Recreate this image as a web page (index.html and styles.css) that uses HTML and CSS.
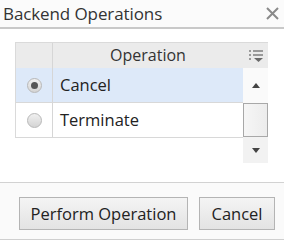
FILE: index.html
```html
<!DOCTYPE html>
<html>
<head>
<meta charset="utf-8">
<link rel="stylesheet" href="styles.css">
</head>
<body>
<div class="dialog">
  <div class="titlebar">
    <span class="title">Backend Operations</span>
    <span class="close">
      <svg width="13" height="13" viewBox="0 0 13 13"><path d="M1 1L12 12M12 1L1 12" stroke="#8a8a8a" stroke-width="2"/></svg>
    </span>
  </div>
  <div class="content">
    <div class="grid">
      <div class="ghead">
        <div class="hcell sel"></div>
        <div class="hcell name">Operation</div>
        <div class="hmenu">
          <svg width="14" height="12" viewBox="0 0 14 12">
            <rect x="0" y="0" width="2" height="2" fill="#9a9a9a"/>
            <rect x="4" y="0" width="10" height="2" fill="#9a9a9a"/>
            <rect x="0" y="4" width="2" height="2" fill="#9a9a9a"/>
            <rect x="4" y="4" width="10" height="2" fill="#9a9a9a"/>
            <rect x="0" y="8" width="2" height="2" fill="#9a9a9a"/>
            <path d="M5 8H14L9.5 12Z" fill="#6a6a6a"/>
          </svg>
        </div>
      </div>
      <div class="gbody">
        <div class="rows">
          <div class="row active">
            <div class="cell sel"><span class="radio on"></span></div>
            <div class="cell name">Cancel</div>
          </div>
          <div class="row">
            <div class="cell sel"><span class="radio"></span></div>
            <div class="cell name">Terminate</div>
          </div>
        </div>
        <div class="scroll">
          <div class="sbtn up"><span class="tri-up"></span></div>
          <div class="thumb"></div>
          <div class="sbtn down"><span class="tri-down"></span></div>
        </div>
      </div>
    </div>
  </div>
  <div class="footer">
    <button class="btn wide">Perform Operation</button>
    <button class="btn">Cancel</button>
  </div>
</div>
</body>
</html>
```
FILE: styles.css
```css
html, body {
  margin: 0;
  padding: 0;
  background: #ffffff;
}
body {
  font-family: "Open Sans", "Noto Sans", sans-serif;
  color: #222;
}
.dialog {
  width: 284px;
  height: 240px;
  display: flex;
  flex-direction: column;
  box-sizing: border-box;
}
.titlebar {
  height: 27px;
  border-bottom: 2px solid #c9c9c9;
  background: #fbfbfb;
  display: flex;
  align-items: center;
  justify-content: space-between;
  padding: 0 5px 0 3px;
}
.title {
  font-size: 17px;
  color: #333;
  letter-spacing: -0.1px;
}
.close {
  display: flex;
  width: 13px;
  height: 13px;
}
.content {
  padding: 13px 16px 0 15px;
  height: 138px;
  box-sizing: border-box;
}
.grid {
  width: 253px;
}
.ghead {
  display: flex;
  height: 26px;
  background: #ebebeb;
  border-top: 1px solid #dadada;
  border-left: 1px solid #dadada;
  box-sizing: border-box;
}
.hcell.sel {
  width: 36px;
  border-right: 1px solid #d6d6d6;
}
.hcell.name {
  flex: 1;
  text-align: center;
  font-size: 16px;
  line-height: 25px;
  color: #333;
  padding-left: 0;
}
.hmenu {
  width: 25px;
  display: flex;
  align-items: center;
  justify-content: center;
}
.gbody {
  display: flex;
}
.rows {
  width: 228px;
}
.row {
  display: flex;
  height: 34px;
  border-bottom: 1px solid #d8d8d8;
  border-left: 1px solid #dadada;
  background: #fff;
}
.row.active {
  background: #dde9f9;
}
.cell.sel {
  width: 36px;
  border-right: 1px solid #d6d6d6;
  display: flex;
  align-items: center;
  justify-content: center;
}
.cell.name {
  flex: 1;
  padding-left: 7px;
  font-size: 16.5px;
  line-height: 33px;
  color: #222;
}
.radio {
  width: 13px;
  height: 13px;
  border-radius: 50%;
  border: 1px solid #b8b8b8;
  background: linear-gradient(#f0f0f0, #d4d4d4);
  display: flex;
  align-items: center;
  justify-content: center;
}
.radio.on::after {
  content: "";
  width: 7px;
  height: 7px;
  border-radius: 50%;
  background: #555;
}
.scroll {
  width: 25px;
  display: flex;
  flex-direction: column;
  height: 95px;
}
.sbtn {
  display: flex;
  justify-content: center;
  align-items: center;
}
.sbtn.up {
  height: 35px;
  background: #fafafa;
}
.sbtn.down {
  height: 26px;
  background: #f2f2f2;
}
.thumb {
  height: 34px;
  box-sizing: border-box;
  border: 1px solid #a8a8a8;
  background: linear-gradient(90deg, #f6f6f6, #ececec);
}
.tri-up {
  width: 0;
  height: 0;
  border-left: 4px solid transparent;
  border-right: 4px solid transparent;
  border-bottom: 5px solid #444;
}
.tri-down {
  width: 0;
  height: 0;
  border-left: 4px solid transparent;
  border-right: 4px solid transparent;
  border-top: 5px solid #444;
}
.footer {
  margin-top: 15px;
  height: 58px;
  border-top: 1px solid #d2d2d2;
  border-bottom: 1px solid #cfcfcf;
  background: #fafafa;
  display: flex;
  gap: 11px;
  padding: 14px 0 0 19px;
  box-sizing: border-box;
}
.btn {
  height: 33px;
  font-family: "Open Sans", "Noto Sans", sans-serif;
  font-size: 16.5px;
  color: #222;
  border: 1px solid #b4b4b4;
  background: linear-gradient(#f4f4f4, #e3e3e3);
  padding: 0;
  margin: 0;
}
.btn.wide {
  width: 169px;
}
.btn:not(.wide) {
  width: 76px;
}
```
